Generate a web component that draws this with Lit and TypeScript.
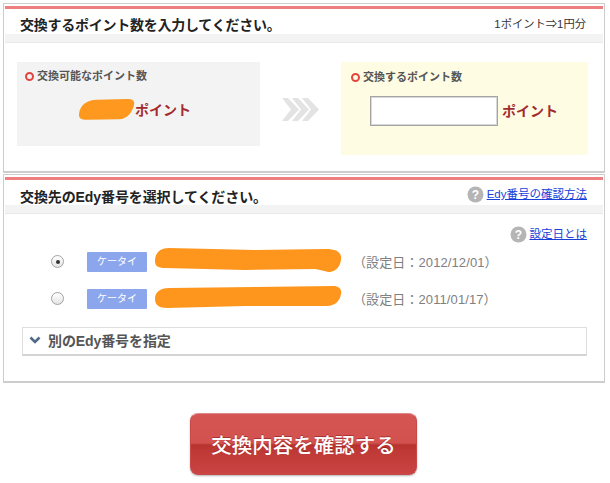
import { LitElement, html, css } from "lit";
import { customElement } from "lit/decorators.js";

const help = html`<svg class="help" width="17" height="17" viewBox="0 0 17 17">
  <circle cx="8.5" cy="8.5" r="8" fill="#b5b5b5"></circle>
  <text x="8.5" y="13" text-anchor="middle" font-size="12" font-weight="700" fill="#fff" font-family="Liberation Sans, sans-serif">?</text>
</svg>`;

const ring = html`<span class="ring"></span>`;

@customElement("app-root")
class AppRoot extends LitElement {
  static styles = css`
    :host {
      display: block;
      width: 610px;
      height: 483px;
      overflow: hidden;
      background: #fff;
      font-family: "Liberation Sans", "Noto Sans CJK JP", sans-serif;
      color: #333;
    }
    .page {
      padding: 3px 5px 0 3px;
    }
    .panel {
      border: 1px solid #cdcdcd;
      border-bottom: 2px solid #cdcdcd;
      padding: 2px 1px 0;
      box-sizing: border-box;
    }
    .panel.first {
      height: 170px;
    }
    .panel.second {
      height: 209px;
      margin-top: 1px;
    }
    .head {
      border-top: 3px solid #ee7f7f;
      height: 37px;
      box-sizing: border-box;
      display: flex;
      justify-content: space-between;
      padding: 7px 16px 0 15px;
      background: linear-gradient(#fff 25px, #f3f3f3 25px, #f3f3f3 33px, #e9e9e9 33px);
    }
    .second .head {
      padding-top: 8px;
    }
    h2 {
      margin: 0;
      font-size: 14px;
      line-height: 18px;
      font-weight: 700;
      color: #222;
    }
    .first h2 {
      letter-spacing: -0.25px;
    }
    .second h2 {
      letter-spacing: -0.1px;
    }
    .rate {
      font-size: 11.3px;
      line-height: 14px;
      padding: 1px 1px 0 0;
      color: #333;
    }
    .exchange {
      display: flex;
      align-items: flex-start;
      padding: 19px 15px 0 12px;
    }
    .box {
      box-sizing: border-box;
    }
    .have {
      width: 243px;
      height: 84px;
      background: #f3f3f3;
      padding: 7px 8px;
    }
    .give {
      width: 247px;
      height: 93px;
      background: #fefce3;
      padding: 8px 10px;
    }
    .arrows {
      width: 81px;
      display: flex;
      justify-content: center;
      padding-top: 36px;
    }
    .label {
      display: flex;
      align-items: center;
      gap: 3px;
      font-size: 11px;
      line-height: 14px;
      font-weight: 700;
      color: #555;
    }
    .ring {
      width: 5px;
      height: 5px;
      border: 2px solid #e2453f;
      border-radius: 50%;
      display: inline-block;
    }
    .amount {
      display: flex;
      align-items: center;
      justify-content: center;
      padding: 16px 7px 0 0;
    }
    .unit {
      font-size: 14px;
      line-height: 20px;
      font-weight: 700;
      color: #a32a2e;
    }
    .entry {
      display: flex;
      align-items: center;
      gap: 4px;
      padding: 12px 0 0 19px;
    }
    .field {
      width: 128px;
      height: 30px;
      box-sizing: border-box;
      border: 1px solid #a4a4a4;
      box-shadow: inset 0 0 0 1px #d8d8d8;
      background: #fff;
      display: block;
      padding: 0;
    }
    .link {
      display: flex;
      align-items: center;
      gap: 3px;
      font-size: 11.5px;
      line-height: 17px;
      color: #1a3fd8;
    }
    .head .link {
      margin-top: -2px;
      height: 17px;
    }
    .link a {
      color: inherit;
      text-decoration: underline;
    }
    .help {
      flex: none;
    }
    .help-row {
      display: flex;
      justify-content: flex-end;
      padding: 11px 16px 0 0;
      height: 18px;
    }
    .row {
      display: grid;
      grid-template-columns: 14px 22px 60px 8px 187px 1fr;
      align-items: center;
      padding-left: 46px;
      height: 37px;
    }
    .radio {
      width: 13px;
      height: 13px;
      box-sizing: border-box;
      border-radius: 50%;
      border: 1px solid #a2a2a2;
      background: linear-gradient(#fff, #e4e4e4);
      display: flex;
      align-items: center;
      justify-content: center;
    }
    .radio i {
      width: 4px;
      height: 4px;
      border-radius: 50%;
      background: #333;
    }
    .tag {
      grid-column: 3;
      height: 20px;
      background: #8ca6ee;
      border-radius: 1px;
      color: #fff;
      font-size: 10px;
      line-height: 20px;
      text-align: center;
    }
    .scribble {
      grid-column: 5;
      display: block;
      margin-bottom: 4px;
    }
    .date {
      grid-column: 6;
      font-size: 13px;
      letter-spacing: 0.1px;
      color: #808080;
      padding-left: 11px;
      white-space: nowrap;
    }
    .other {
      margin: 10px 16px 0 17px;
      height: 29px;
      box-sizing: border-box;
      border: 1px solid #dedede;
      border-bottom: 2px solid #d4d4d4;
      display: flex;
      align-items: center;
      gap: 7px;
      padding: 0 0 2px 6px;
      font-size: 14px;
      letter-spacing: -0.1px;
      font-weight: 700;
      color: #555;
    }
    .footer {
      display: flex;
      justify-content: center;
      padding: 30px 1px 0 0;
    }
    .confirm {
      width: 227px;
      height: 62px;
      box-sizing: border-box;
      border: 1px solid #c64a48;
      border-top-color: #de8a88;
      border-radius: 8px;
      background: linear-gradient(#d55552 0, #d35250 48%, #b8322e 52%, #bf3a36 62%, #c94442 100%);
      box-shadow: 0 1px 2px rgba(0, 0, 0, 0.3);
      color: #fff;
      font: inherit;
      font-size: 20.500px;
      font-weight: 500;
      padding: 0;
      text-shadow: 0 -1px 0 rgba(120, 20, 20, 0.5);
    }
  `;

  render() {
    return html`
      <div class="page">
        <section class="panel first">
          <div class="head">
            <h2>交換するポイント数を入力してください。</h2>
            <span class="rate">1ポイント⇒1円分</span>
          </div>
          <div class="exchange">
            <div class="box have">
              <div class="label">${ring}交換可能なポイント数</div>
              <div class="amount">
                <svg width="56" height="21" viewBox="0 0 56 21">
                  <path d="M0 15C1 6 8 1 18 .8L48 0C54 0 56 2 55 6 53 14 48 20 40 20.300L8 20.800C2 21-.5 19 0 15Z" fill="#fe981e"></path>
                </svg>
                <span class="unit">ポイント</span>
              </div>
            </div>
            <div class="arrows">
              <svg width="37" height="23" viewBox="0 0 37 23">
                <path d="M0 0h6l11 11.500L6 23H0l9-11.500ZM10 0h6l11 11.500L16 23h-6l9-11.500ZM20 0h6l11 11.500L26 23h-6l9-11.500Z" fill="#e3e3e3"></path>
              </svg>
            </div>
            <div class="box give">
              <div class="label">${ring}交換するポイント数</div>
              <div class="entry">
                <input class="field" type="text" />
                <span class="unit">ポイント</span>
              </div>
            </div>
          </div>
        </section>
        <section class="panel second">
          <div class="head">
            <h2>交換先のEdy番号を選択してください。</h2>
            <span class="link">${help}<a href="#">Edy番号の確認方法</a></span>
          </div>
          <div class="help-row">
            <span class="link">${help}<a href="#">設定日とは</a></span>
          </div>
          <div class="row">
            <span class="radio"><i></i></span>
            <span class="tag">ケータイ</span>
            <svg class="scribble" width="187" height="24" viewBox="0 0 187 24">
              <path d="M0 13C0 5 5 0 14 0L100 2 170 1C183 1 187 5 186 12 185 19 181 23 175 24 171 24 168 22 160 21L90 22 10 20C3 20 0 18 0 13Z" fill="#fe951d"></path>
            </svg>
            <span class="date">（設定日：2012/12/01）</span>
          </div>
          <div class="row">
            <span class="radio"></span>
            <span class="tag">ケータイ</span>
            <svg class="scribble" width="187" height="22" viewBox="0 0 187 22">
              <path d="M0 13C0 6 5 2 14 2L100 1 178 0C184 0 187 3 186 8 185 15 180 20 172 20L90 20 12 22C4 22 0 19 0 13Z" fill="#fe951d"></path>
            </svg>
            <span class="date">（設定日：2011/01/17）</span>
          </div>
          <div class="other">
            <svg width="12" height="8" viewBox="0 0 12 8">
              <path d="M1.500 1.500 6 6l4.500-4.500" fill="none" stroke="#4f6a87" stroke-width="2.600"></path>
            </svg>
            別のEdy番号を指定
          </div>
        </section>
        <div class="footer">
          <button class="confirm">交換内容を確認する</button>
        </div>
      </div>
    `;
  }
}

export default AppRoot;
